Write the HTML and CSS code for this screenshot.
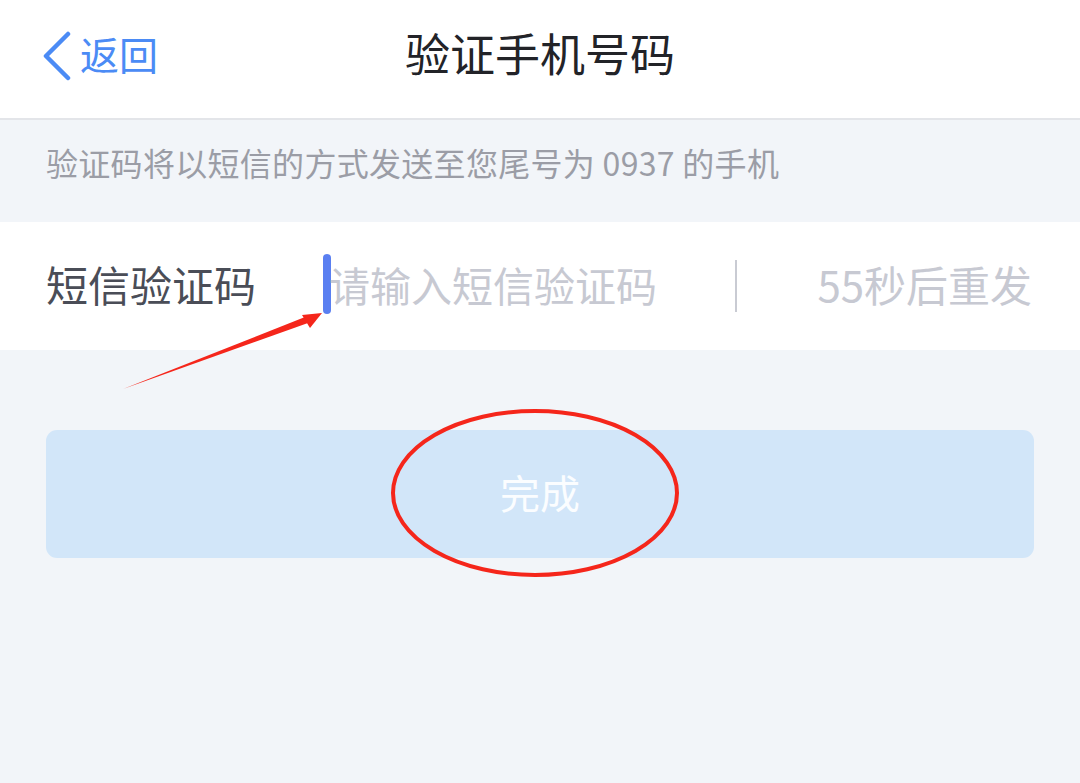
FILE: index.html
```html
<!DOCTYPE html>
<html lang="zh-CN">
<head>
    <meta charset="UTF-8">
    <meta name="viewport" content="width=device-width, initial-scale=1.0">
    <title>验证手机号码</title>
    <link rel="stylesheet" href="styles.css">
</head>
<body>
    <div class="page">
        <!-- Top bar -->
        <div class="nav">
            <a class="back" href="#">
                <svg class="back-icon" width="30" height="50" viewBox="0 0 30 50">
                    <path d="M26 3 L4 25 L26 47" fill="none" stroke="#4b8bf5" stroke-width="4.5" stroke-linecap="round" stroke-linejoin="round"/>
                </svg>
                <span>返回</span>
            </a>
            <div class="nav-title">验证手机号码</div>
            <div></div>
        </div>

        <div class="hint">验证码将以短信的方式发送至您尾号为 0937 的手机</div>

        <!-- Code input row -->
        <div class="code-row">
            <div class="code-label">短信验证码</div>
            <div class="code-input">
                <span class="cursor"></span>
                <span class="placeholder">请输入短信验证码</span>
            </div>
            <span class="divider"></span>
            <div class="resend">55秒后重发</div>
        </div>

        <div class="submit-btn">完成</div>

        <!-- Red annotation marks -->
        <svg class="marks" width="1080" height="783" viewBox="0 0 1080 783">
            <polygon points="123,389 305,317 308,323" fill="#f5261b"/>
            <polygon points="322,313 302,315 310,328" fill="#f5261b"/>
            <ellipse cx="535" cy="493" rx="142" ry="82" fill="none" stroke="#f5261b" stroke-width="4"/>
        </svg>
    </div>
</body>
</html>
```

FILE: styles.css
```css
body {
    margin: 0;
    background-color: #f2f5f9;
    font-family: "Noto Sans CJK SC", "Noto Sans", sans-serif;
}
.page {
    position: relative;
    width: 1080px;
    height: 783px;
    overflow: hidden;
}
.nav {
    height: 118px;
    background-color: #fff;
    border-bottom: 2px solid #e3e5e9;
    display: grid;
    grid-template-columns: 1fr auto 1fr;
    align-items: center;
}
.back {
    display: flex;
    align-items: center;
    padding-left: 42px;
    color: #4b8bf5;
    text-decoration: none;
    font-size: 39px;
    line-height: 1;
    margin-top: -12px;
}
.back-icon {
    margin-right: 8px;
    margin-top: 6px;
}
.nav-title {
    font-size: 45px;
    line-height: 1;
    color: #222328;
    margin-top: -14px;
}
.hint {
    height: 102px;
    display: flex;
    align-items: center;
    padding-left: 46px;
    padding-bottom: 18px;
    box-sizing: border-box;
    font-size: 32px;
    line-height: 1;
    color: #9b9da6;
    letter-spacing: 0.3px;
}
.code-row {
    height: 128px;
    background-color: #fff;
    display: flex;
    align-items: center;
    padding: 0 48px 0 46px;
}
.code-label {
    width: 277px;
    font-size: 42px;
    line-height: 1;
    color: #4a4d57;
    margin-top: -4px;
}
.code-input {
    flex: 1;
    display: flex;
    align-items: center;
}
.cursor {
    width: 8px;
    height: 60px;
    border-radius: 4px;
    background-color: #5a7ff1;
    margin-top: -4px;
}
.placeholder {
    font-size: 41px;
    line-height: 1;
    color: #c7c9d2;
    margin-left: -2px;
    margin-top: -4px;
}
.divider {
    width: 2px;
    height: 52px;
    background-color: #c9cbd3;
    margin-right: 80px;
}
.resend {
    font-size: 42px;
    line-height: 1;
    color: #c7c9d2;
    margin-top: -4px;
}
.submit-btn {
    margin: 80px 46px 0 46px;
    height: 128px;
    border-radius: 11px;
    background-color: #d2e6f9;
    color: #fbfdff;
    font-size: 40px;
    line-height: 1;
    padding-bottom: 4px;
    box-sizing: border-box;
    display: flex;
    align-items: center;
    justify-content: center;
}
.marks {
    position: absolute;
    left: 0;
    top: 0;
    pointer-events: none;
}
```
